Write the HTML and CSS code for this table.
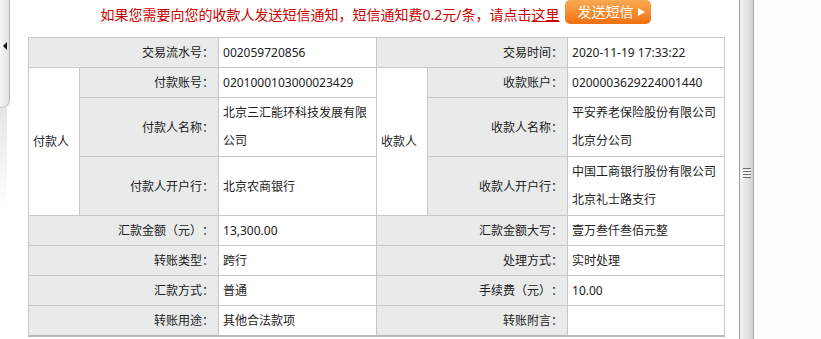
FILE: index.html
```html
<!DOCTYPE html>
<html lang="zh-CN">
<head>
<meta charset="utf-8">
<title>交易详情</title>
<link rel="stylesheet" href="styles.css">
</head>
<body>
<div class="page">
  <aside class="side">
    <div class="side-tab"><span class="arrow"></span></div>
    <div class="side-fade"></div>
  </aside>
  <main class="main">
    <div class="wrap">
      <div class="notice">
        <span class="notice-text">如果您需要向您的收款人发送短信通知，短信通知费0.2元/条，请点击<a href="#">这里</a></span>
        <span class="btn">发送短信<span class="tri"></span></span>
      </div>
      <table class="detail">
        <colgroup>
          <col class="c-party"><col class="c-label"><col class="c-val-l">
          <col class="c-party"><col class="c-label2"><col class="c-val-r">
        </colgroup>
        <tr>
          <td class="label" colspan="2">交易流水号：</td>
          <td class="val">002059720856</td>
          <td class="label" colspan="2">交易时间：</td>
          <td class="val">2020-11-19 17:33:22</td>
        </tr>
        <tr>
          <td class="party" rowspan="3">付款人</td>
          <td class="label">付款账号：</td>
          <td class="val">0201000103000023429</td>
          <td class="party" rowspan="3">收款人</td>
          <td class="label">收款账户：</td>
          <td class="val">0200003629224001440</td>
        </tr>
        <tr>
          <td class="label">付款人名称：</td>
          <td class="val multi">北京三汇能环科技发展有限<br>公司</td>
          <td class="label">收款人名称：</td>
          <td class="val multi">平安养老保险股份有限公司<br>北京分公司</td>
        </tr>
        <tr>
          <td class="label">付款人开户行：</td>
          <td class="val">北京农商银行</td>
          <td class="label">收款人开户行：</td>
          <td class="val multi">中国工商银行股份有限公司<br>北京礼士路支行</td>
        </tr>
        <tr>
          <td class="label" colspan="2">汇款金额（元）：</td>
          <td class="val">13,300.00</td>
          <td class="label" colspan="2">汇款金额大写：</td>
          <td class="val">壹万叁仟叁佰元整</td>
        </tr>
        <tr>
          <td class="label" colspan="2">转账类型：</td>
          <td class="val">跨行</td>
          <td class="label" colspan="2">处理方式：</td>
          <td class="val">实时处理</td>
        </tr>
        <tr>
          <td class="label" colspan="2">汇款方式：</td>
          <td class="val">普通</td>
          <td class="label" colspan="2">手续费（元）：</td>
          <td class="val">10.00</td>
        </tr>
        <tr>
          <td class="label" colspan="2">转账用途：</td>
          <td class="val">其他合法款项</td>
          <td class="label" colspan="2">转账附言：</td>
          <td class="val"></td>
        </tr>
      </table>
    </div>
  </main>
  <div class="splitter"><span class="grip"></span></div>
  <div class="rest"></div>
</div>
</body>
</html>
```

FILE: styles.css
```css
html, body {
  margin: 0;
  padding: 0;
  background: #fff;
}
body {
  font-family: "Noto Sans", "Noto Sans CJK SC", sans-serif;
  font-size: 12px;
  color: #222;
  overflow: hidden;
  text-spacing-trim: space-all;
}
.page {
  display: flex;
  height: 339px;
}

/* left collapse tab */
.side {
  width: 10px;
  flex: none;
  display: flex;
  flex-direction: column;
}
.side-tab {
  height: 108px;
  box-sizing: border-box;
  padding-top: 42px;
  padding-left: 3px;
  background: linear-gradient(to right, #f4f4f4, #e3e3e3);
  border-right: 1px solid #b4b4b4;
  border-bottom: 1px solid #c4c4c4;
  border-bottom-right-radius: 8px;
}
.arrow {
  display: block;
  width: 0;
  height: 0;
  border-right: 4px solid #111;
  border-top: 4px solid transparent;
  border-bottom: 4px solid transparent;
}
.side-fade {
  width: 7px;
  height: 100px;
  background: linear-gradient(to bottom, #e6e6e6, rgba(255, 255, 255, 0));
}

/* main */
.main {
  width: 729px;
  flex: none;
  box-sizing: border-box;
  padding-left: 18px;
}
.wrap {
  width: 696px;
}
.notice {
  height: 37px;
  display: flex;
  justify-content: center;
  align-items: flex-start;
}
.notice-text {
  font-size: 14px;
  line-height: 20px;
  margin-top: 5px;
  color: #cc0000;
}
.notice-text a {
  color: #cc0000;
  text-decoration: underline;
}
.btn {
  margin-left: 6px;
  width: 86px;
  height: 24px;
  box-sizing: border-box;
  padding-left: 12px;
  display: flex;
  align-items: center;
  border-radius: 5px;
  background: linear-gradient(to bottom, #f9aa52, #f07010);
  color: #fff;
  font-size: 14px;
  line-height: 22px;
}
.tri {
  margin-left: 5px;
  width: 0;
  height: 0;
  border-left: 7px solid #fff;
  border-top: 4px solid transparent;
  border-bottom: 4px solid transparent;
}

/* table */
.detail {
  width: 696px;
  table-layout: fixed;
  border-collapse: collapse;
  border-bottom: 2px solid #b8b8b8;
}
.c-party { width: 51px; }
.c-label { width: 139px; }
.c-val-l { width: 158px; }
.c-label2 { width: 140px; }
.c-val-r { width: 157px; }
.detail td {
  border: 1px solid #c8c8c8;
  padding: 0 4px;
  line-height: 29px;
  white-space: nowrap;
  overflow: hidden;
  vertical-align: middle;
}
.detail .label {
  background: #e9eaea;
  text-align: right;
}
.detail .party {
  background: #fff;
  text-align: left;
}
.detail .val {
  background: #fff;
  text-align: left;
}
.detail .multi {
  line-height: 28px;
  padding: 1px 4px;
}

/* splitter */
.splitter {
  width: 15px;
  flex: none;
  box-sizing: border-box;
  border-left: 1px solid #9d9d9d;
  border-right: 1px solid #a9a9a9;
  background: linear-gradient(to right, #f2f2f2, #e2e2e2 60%, #d0d0d0);
  box-shadow: 2px 0 3px rgba(0, 0, 0, 0.12);
  display: flex;
  justify-content: center;
  align-items: flex-start;
  padding-top: 168px;
}
.grip {
  width: 8px;
  height: 10px;
  background: repeating-linear-gradient(to bottom, #707070 0 1px, #eeeeee 1px 3px);
}
.rest {
  flex: 1;
  background: #fdfdfd;
}
```
